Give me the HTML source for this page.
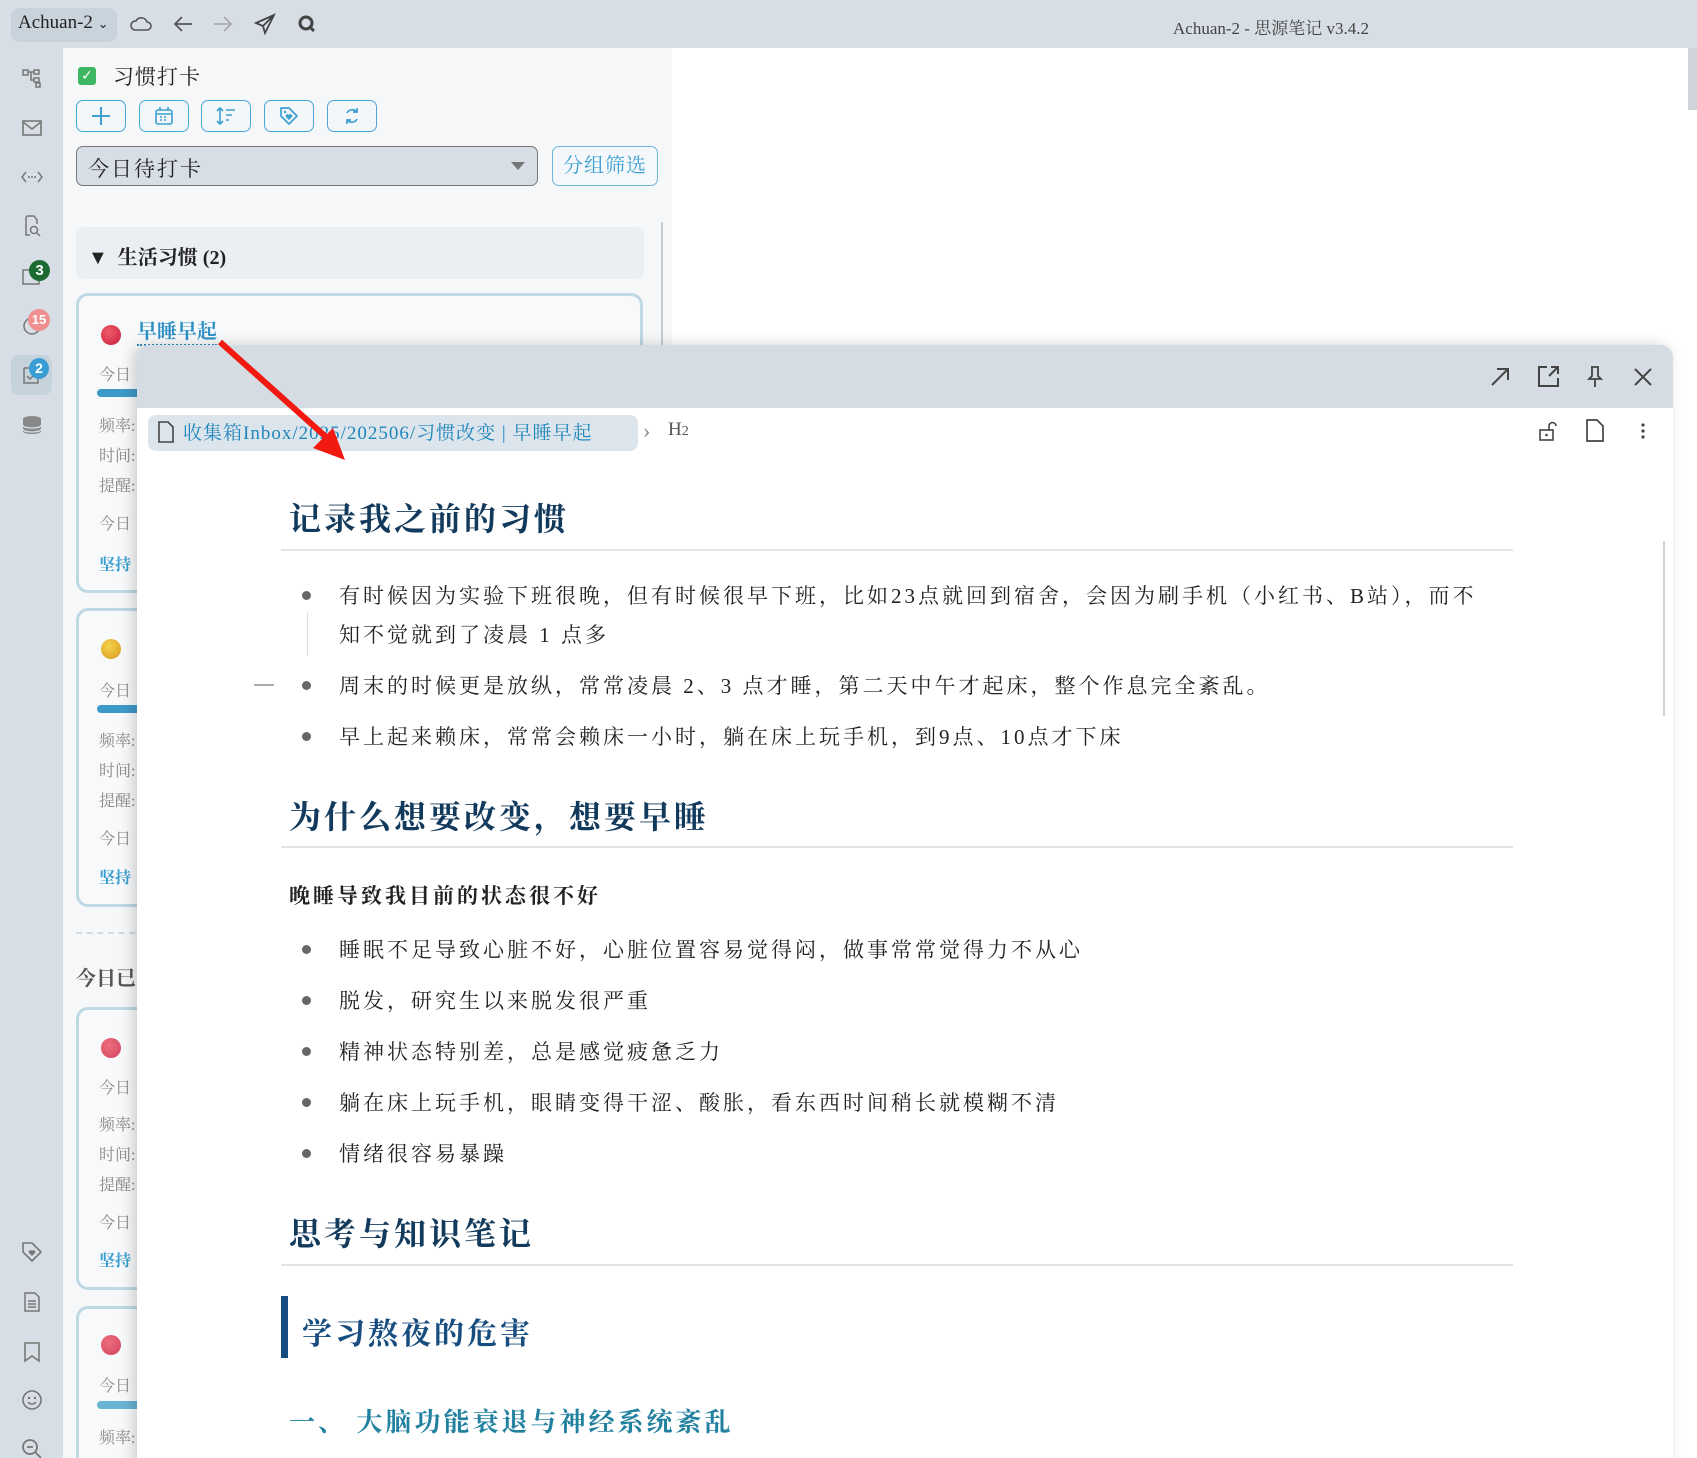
<!DOCTYPE html>
<html><head><meta charset="utf-8"><style>
*{margin:0;padding:0;box-sizing:border-box}
html,body{width:1697px;height:1458px;overflow:hidden}
body{background:#d7dee5;font-family:"Liberation Serif","Noto Serif CJK SC",serif;color:#222}
#w{position:relative;width:1697px;height:1458px;overflow:hidden}
.a{position:absolute}
.ic{position:absolute;left:20px;width:24px;height:24px}
svg{display:block}
.btn{position:absolute;top:100px;width:50px;height:32px;border:1.5px solid #4aa6d6;border-radius:7px;background:#f4f7fa}
.btn svg{margin:5px auto}
.card{position:absolute;left:76px;width:567px;border:3px solid #bfd8e4;border-radius:12px;background:#f7f9fb}
.lbl{position:absolute;left:20px;font-size:16px;color:#888}
.dot{position:absolute;left:22px;width:20px;height:20px;border-radius:50%}
.bar{position:absolute;left:18px;width:60px;height:8px;border-radius:4px;background:#3d9ac8}
.li{position:absolute;left:339px;font-size:21px;color:#222;letter-spacing:3px;white-space:nowrap}
.bu{position:absolute;left:302px;width:9px;height:9px;border-radius:50%;background:#666}
h2{position:absolute;left:289px;font-size:32px;font-weight:bold;color:#123a5c;letter-spacing:3px}
.hr{position:absolute;left:281px;width:1232px;height:2px;background:#e2e5e8}
</style></head><body><div id="w">
<!-- top bar -->
<div class="a" style="left:11px;top:8px;width:106px;height:34px;border-radius:8px;background:#c9d3dc"></div>
<div class="a" style="left:18px;top:12px;font-size:19px;color:#222">Achuan-2 <span style="font-size:13px">&#8964;</span></div>
<svg class="a" style="left:130px;top:14px" width="22" height="20" viewBox="0 0 22 20"><path d="M5 16h12a4 4 0 0 0 0-8 6 6 0 0 0-11-1 4.5 4.5 0 0 0-1 9z" fill="none" stroke="#555" stroke-width="1.6"/></svg>
<svg class="a" style="left:172px;top:14px" width="22" height="20"><path d="M20 10H3M10 3L3 10l7 7" fill="none" stroke="#555" stroke-width="1.8"/></svg>
<svg class="a" style="left:212px;top:14px" width="22" height="20"><path d="M2 10h17M12 3l7 7-7 7" fill="none" stroke="#aaa" stroke-width="1.8"/></svg>
<svg class="a" style="left:254px;top:13px" width="22" height="22"><path d="M20 2L2 10l7 3 2 7z M9 13L20 2" fill="none" stroke="#444" stroke-width="1.8"/></svg>
<svg class="a" style="left:297px;top:14px" width="20" height="20"><circle cx="9" cy="9" r="6" fill="none" stroke="#444" stroke-width="3"/><path d="M12 12l5 5" stroke="#444" stroke-width="3"/></svg>
<div class="a" style="left:1173px;top:14px;font-size:17px;color:#444">Achuan-2 - 思源笔记 v3.4.2</div>
<!-- left icons -->
<svg class="ic" style="top:66px" viewBox="0 0 24 24"><path d="M3 4h5v5H3zM14 4h5v4h-5zM14 12h5v4h-5zM16 17h4v4h-4zM8 6h6M11 6v8h3" fill="none" stroke="#777" stroke-width="1.5"/></svg>
<svg class="ic" style="top:116px" viewBox="0 0 24 24"><rect x="3" y="5" width="18" height="14" fill="none" stroke="#777" stroke-width="1.6"/><path d="M3 6l9 7 9-7" fill="none" stroke="#777" stroke-width="1.6"/></svg>
<svg class="ic" style="top:165px" viewBox="0 0 24 24"><path d="M6 7l-4 5 4 5M18 7l4 5-4 5" fill="none" stroke="#777" stroke-width="1.5"/><circle cx="9" cy="12" r="1" fill="#777"/><circle cx="12" cy="12" r="1" fill="#777"/><circle cx="15" cy="12" r="1" fill="#777"/></svg>
<svg class="ic" style="top:214px" viewBox="0 0 24 24"><path d="M10 21H6V4a2 2 0 0 1 2-2h6l3 4v4" fill="none" stroke="#777" stroke-width="1.5"/><circle cx="14" cy="16" r="3.5" fill="none" stroke="#777" stroke-width="1.5"/><path d="M17 19l3 3" stroke="#777" stroke-width="1.5"/></svg>
<svg class="ic" style="top:264px" viewBox="0 0 24 24"><rect x="3" y="6" width="16" height="14" fill="none" stroke="#777" stroke-width="1.5"/></svg>
<div class="a" style="left:29px;top:260px;width:21px;height:21px;border-radius:50%;background:#1c6b32;color:#fff;font-size:15px;font-weight:bold;text-align:center;line-height:21px;font-family:'Liberation Sans'">3</div>
<svg class="ic" style="top:313px" viewBox="0 0 24 24"><circle cx="12" cy="13" r="8" fill="none" stroke="#777" stroke-width="1.5"/></svg>
<div class="a" style="left:28px;top:309px;width:22px;height:22px;border-radius:50%;background:#ef8f8f;color:#fff;font-size:13px;font-weight:bold;text-align:center;line-height:22px;font-family:'Liberation Sans'">15</div>
<div class="a" style="left:11px;top:355px;width:41px;height:40px;border-radius:8px;background:#c6d2dc"></div>
<svg class="ic" style="top:362px" viewBox="0 0 24 24"><path d="M4 6h9M4 6v15h14v-6" fill="none" stroke="#777" stroke-width="1.5"/><path d="M7 14l3 3 5-5" fill="none" stroke="#777" stroke-width="1.5"/></svg>
<div class="a" style="left:29px;top:358px;width:20px;height:21px;border-radius:50%;background:#3a9ed4;color:#fff;font-size:14px;font-weight:bold;text-align:center;line-height:21px;font-family:'Liberation Sans'">2</div>
<svg class="ic" style="top:413px" viewBox="0 0 24 24"><ellipse cx="12" cy="6" rx="9" ry="3" fill="#888"/><path d="M3 6v12c0 2 4 3 9 3s9-1 9-3V6" fill="#888"/><path d="M3 12c0 2 4 3 9 3s9-1 9-3M3 16c0 2 4 3 9 3s9-1 9-3" fill="none" stroke="#d7dee5" stroke-width="1.2"/></svg>
<svg class="ic" style="top:1240px" viewBox="0 0 24 24"><path d="M3 3h9l9 9-9 9-9-9z" fill="none" stroke="#777" stroke-width="1.6" stroke-linejoin="round"/><path d="M12 16l-3-3a1.7 1.7 0 0 1 3-2 1.7 1.7 0 0 1 3 2z" fill="#777"/></svg>
<svg class="ic" style="top:1290px" viewBox="0 0 24 24"><path d="M5 3h10l4 4v14H5zM8 11h8M8 14h8M8 17h8" fill="none" stroke="#777" stroke-width="1.5"/></svg>
<svg class="ic" style="top:1340px" viewBox="0 0 24 24"><path d="M5 3h14v18l-7-5-7 5z" fill="none" stroke="#777" stroke-width="1.6"/></svg>
<svg class="ic" style="top:1388px" viewBox="0 0 24 24"><circle cx="12" cy="12" r="9" fill="none" stroke="#777" stroke-width="1.6"/><circle cx="9" cy="10" r="1.2" fill="#777"/><circle cx="15" cy="10" r="1.2" fill="#777"/><path d="M8 14a5 5 0 0 0 8 0" fill="none" stroke="#777" stroke-width="1.6"/></svg>
<svg class="ic" style="top:1437px" viewBox="0 0 24 24"><circle cx="10" cy="10" r="7" fill="none" stroke="#777" stroke-width="1.8"/><path d="M7 10h6M15 15l6 6" stroke="#777" stroke-width="1.8"/></svg>

<!-- left panel -->
<div class="a" style="left:63px;top:48px;width:609px;height:1410px;background:#f5f7f9"></div>
<div class="a" style="left:672px;top:48px;width:1025px;height:1410px;background:#fff"></div>
<div class="a" style="left:1688px;top:48px;width:9px;height:62px;background:#cfd5da"></div>
<div class="a" style="left:78px;top:67px;width:18px;height:18px;border-radius:3px;background:#3fb662;color:#fff;font-size:14px;line-height:18px;text-align:center;font-family:'DejaVu Sans'">✓</div>
<div class="a" style="left:113px;top:61px;font-size:21px;color:#222;letter-spacing:1px">习惯打卡</div>
<div class="btn" style="left:76px"><svg width="20" height="20"><path d="M10 1v18M1 10h18" stroke="#3e9fd1" stroke-width="2"/></svg></div>
<div class="btn" style="left:139px"><svg width="20" height="20"><rect x="2" y="4" width="16" height="14" rx="2" fill="none" stroke="#3e9fd1" stroke-width="1.6"/><path d="M2 8h16M6 1v4M14 1v4M6 11h2M10 11h2M6 14h2M10 14h2" stroke="#3e9fd1" stroke-width="1.6"/></svg></div>
<div class="btn" style="left:201px"><svg width="20" height="20"><path d="M4 2v16M1 5l3-3 3 3M1 15l3 3 3-3M10 4h9M10 9h6M10 14h3" fill="none" stroke="#3e9fd1" stroke-width="1.6"/></svg></div>
<div class="btn" style="left:264px"><svg width="20" height="20"><path d="M2 2h8l8 8-8 8-8-8z" fill="none" stroke="#3e9fd1" stroke-width="1.7" stroke-linejoin="round"/><circle cx="6" cy="6" r="1.3" fill="#3e9fd1"/><path d="M10 14l-3-3a1.5 1.5 0 0 1 3-2 1.5 1.5 0 0 1 3 2z" fill="#3e9fd1"/></svg></div>
<div class="btn" style="left:327px"><svg width="20" height="20"><path d="M15 6a6 6 0 0 0-10 1M5 14a6 6 0 0 0 10-1M15 2v4h-4M5 18v-4h4" fill="none" stroke="#3e9fd1" stroke-width="1.7"/></svg></div>
<div class="a" style="left:76px;top:146px;width:462px;height:40px;border:1.5px solid #777;border-radius:7px;background:#d7dee5"></div>
<div class="a" style="left:88px;top:153px;font-size:21px;color:#222;letter-spacing:2px">今日待打卡</div>
<div class="a" style="left:511px;top:162px;border-left:7px solid transparent;border-right:7px solid transparent;border-top:8px solid #777"></div>
<div class="a" style="left:552px;top:146px;width:106px;height:40px;border:1.5px solid #6fb6dc;border-radius:7px;background:#f5f8fb;color:#3e9fd1;font-size:20px;text-align:center;line-height:38px;letter-spacing:1px">分组筛选</div>
<div class="a" style="left:76px;top:227px;width:568px;height:52px;border-radius:6px;background:#ebeef2"></div>
<div class="a" style="left:88px;top:241px;font-size:20px;font-weight:bold;color:#222">▼&nbsp;&nbsp;生活习惯 (2)</div>
<div class="a" style="left:661px;top:222px;width:2px;height:130px;background:#c5ccd2"></div>

<div class="card" style="top:293px;height:300px"><div class="dot" style="top:29px;background:radial-gradient(circle at 40% 35%,#f05a6a,#c8203a)"></div><div class="a" style="left:58px;top:24px;font-size:20px;font-weight:bold;color:#2f8fc4;border-bottom:2px dotted #2f8fc4;line-height:24px">早睡早起</div>
<div class="lbl" style="top:66px">今日</div><div class="bar" style="top:93px"></div>
<div class="lbl" style="top:117px">频率:</div><div class="lbl" style="top:147px">时间:</div><div class="lbl" style="top:177px">提醒:</div><div class="lbl" style="top:215px">今日</div><div class="lbl" style="top:256px;color:#3a9ecf;font-weight:bold">坚持</div></div>
<div class="card" style="top:608px;height:299px"><div class="dot" style="top:28px;background:radial-gradient(circle at 40% 35%,#f5d24a,#d89a20)"></div>
<div class="lbl" style="top:67px">今日</div><div class="bar" style="top:94px"></div>
<div class="lbl" style="top:117px">频率:</div><div class="lbl" style="top:147px">时间:</div><div class="lbl" style="top:177px">提醒:</div><div class="lbl" style="top:215px">今日</div><div class="lbl" style="top:254px;color:#3a9ecf;font-weight:bold">坚持</div></div>
<div class="a" style="left:76px;top:932px;width:70px;border-top:2px dashed #d6dade"></div>
<div class="a" style="left:76px;top:962px;font-size:20px;font-weight:bold;color:#555">今日已</div>
<div class="card" style="top:1007px;height:283px"><div class="dot" style="top:28px;background:radial-gradient(circle at 40% 35%,#ef6d7e,#cf4560)"></div>
<div class="lbl" style="top:65px">今日</div><div class="lbl" style="top:102px">频率:</div><div class="lbl" style="top:132px">时间:</div><div class="lbl" style="top:162px">提醒:</div><div class="lbl" style="top:200px">今日</div><div class="lbl" style="top:238px;color:#3a9ecf;font-weight:bold">坚持</div></div>
<div class="card" style="top:1306px;height:170px"><div class="dot" style="top:26px;background:radial-gradient(circle at 40% 35%,#ef6d7e,#cf4560)"></div>
<div class="lbl" style="top:64px">今日</div><div class="bar" style="top:92px;background:#6ab4d4"></div><div class="lbl" style="top:116px">频率:</div></div>

<!-- popup -->
<div class="a" style="left:137px;top:345px;width:1536px;height:1120px;border-radius:12px 12px 0 0;background:#fff;box-shadow:-4px 0 14px rgba(0,0,0,.18);overflow:hidden">
<div class="a" style="left:0;top:0;width:1536px;height:63px;background:#d5dce3"></div>
</div>
<svg class="a" style="left:1489px;top:366px" width="22" height="22"><path d="M3 19L19 3M8 3h11v11" fill="none" stroke="#444" stroke-width="2"/></svg>
<svg class="a" style="left:1537px;top:365px" width="23" height="23"><path d="M10 2H2v19h19v-8M12 11l9-9M14 2h7v7" fill="none" stroke="#444" stroke-width="2"/></svg>
<svg class="a" style="left:1585px;top:365px" width="20" height="23"><path d="M6 2h8M7 2v9l-3 3h12l-3-3V2M10 14v8" fill="none" stroke="#444" stroke-width="1.8"/></svg>
<svg class="a" style="left:1632px;top:366px" width="22" height="22"><path d="M3 3l16 16M19 3L3 19" stroke="#444" stroke-width="2"/></svg>
<div class="a" style="left:148px;top:415px;width:490px;height:36px;border-radius:8px;background:#dde5ec"></div>
<svg class="a" style="left:157px;top:421px" width="18" height="22"><path d="M2 1h9l5 5v15H2z" fill="none" stroke="#444" stroke-width="1.6"/></svg>
<div class="a" style="left:183px;top:418px;font-size:19px;color:#1f86bc;white-space:nowrap;letter-spacing:1px">收集箱Inbox/2025/202506/习惯改变 | 早睡早起</div>
<div class="a" style="left:643px;top:418px;font-size:22px;color:#888">›</div>
<div class="a" style="left:668px;top:419px;font-size:19px;color:#555">H<span style="font-size:14px">2</span></div>
<svg class="a" style="left:1538px;top:420px" width="20" height="22"><rect x="2" y="10" width="13" height="10" fill="none" stroke="#444" stroke-width="1.6"/><path d="M11 10V6a3.5 3.5 0 0 1 7 0" fill="none" stroke="#444" stroke-width="1.6"/><circle cx="8.5" cy="15" r="1.3" fill="#444"/></svg>
<svg class="a" style="left:1585px;top:419px" width="20" height="23"><path d="M2 1h10l6 6v15H2z" fill="none" stroke="#444" stroke-width="1.7"/></svg>
<svg class="a" style="left:1639px;top:422px" width="8" height="18"><circle cx="4" cy="3" r="1.6" fill="#444"/><circle cx="4" cy="9" r="1.6" fill="#444"/><circle cx="4" cy="15" r="1.6" fill="#444"/></svg>
<div class="a" style="left:1663px;top:541px;width:2px;height:175px;background:#ccd2d8"></div>

<h2 style="top:494px">记录我之前的习惯</h2>
<div class="hr" style="top:549px"></div>
<div class="bu" style="top:591px"></div><div class="li" style="top:580px">有时候因为实验下班很晚，但有时候很早下班，比如23点就回到宿舍，会因为刷手机（小红书、B站），而不</div>
<div class="li" style="top:619px">知不觉就到了凌晨 1 点多</div>
<div class="a" style="left:307px;top:612px;width:1px;height:44px;background:#ddd"></div>
<div class="a" style="left:254px;top:684px;width:20px;height:2px;background:#aaa"></div>
<div class="bu" style="top:681px"></div><div class="li" style="top:670px">周末的时候更是放纵，常常凌晨 2、3 点才睡，第二天中午才起床，整个作息完全紊乱。</div>
<div class="bu" style="top:732px"></div><div class="li" style="top:721px">早上起来赖床，常常会赖床一小时，躺在床上玩手机，到9点、10点才下床</div>
<h2 style="top:792px">为什么想要改变，想要早睡</h2>
<div class="hr" style="top:846px"></div>
<div class="a" style="left:289px;top:880px;font-size:21px;font-weight:bold;color:#222;letter-spacing:3px">晚睡导致我目前的状态很不好</div>
<div class="bu" style="top:945px"></div><div class="li" style="top:934px">睡眠不足导致心脏不好，心脏位置容易觉得闷，做事常常觉得力不从心</div>
<div class="bu" style="top:996px"></div><div class="li" style="top:985px">脱发，研究生以来脱发很严重</div>
<div class="bu" style="top:1047px"></div><div class="li" style="top:1036px">精神状态特别差，总是感觉疲惫乏力</div>
<div class="bu" style="top:1098px"></div><div class="li" style="top:1087px">躺在床上玩手机，眼睛变得干涩、酸胀，看东西时间稍长就模糊不清</div>
<div class="bu" style="top:1149px"></div><div class="li" style="top:1138px">情绪很容易暴躁</div>
<h2 style="top:1209px">思考与知识笔记</h2>
<div class="hr" style="top:1264px"></div>
<div class="a" style="left:281px;top:1296px;width:7px;height:62px;background:#154c82"></div>
<div class="a" style="left:302px;top:1309px;font-size:30px;font-weight:bold;color:#184d80;letter-spacing:3px">学习熬夜的危害</div>
<div class="a" style="left:289px;top:1402px;font-size:26px;font-weight:bold;color:#21819f;letter-spacing:3px">一、 大脑功能衰退与神经系统紊乱</div>

<!-- red arrow -->
<svg class="a" style="left:0;top:0" width="400" height="480"><path d="M220 342L335 445" stroke="#f21a10" stroke-width="6"/><path d="M345 460L313 448L333 428z" fill="#f21a10"/></svg>
</div></body></html>
